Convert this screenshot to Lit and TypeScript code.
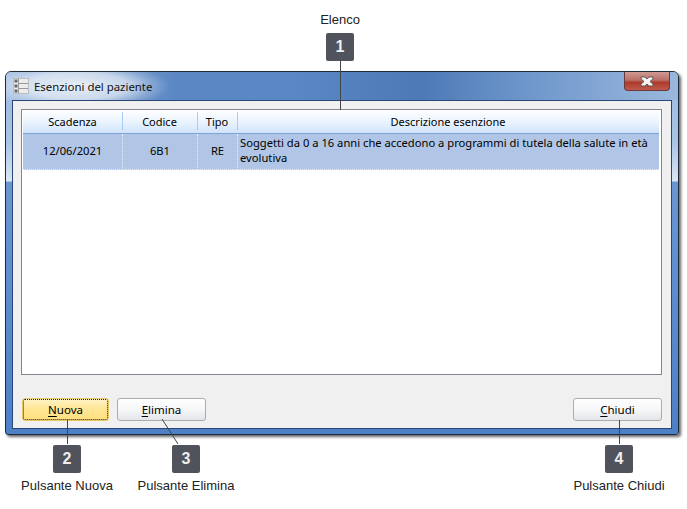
import { LitElement, html, css } from "lit";
import { customElement } from "lit/decorators.js";

const rows = [
  { scad: "12/06/2021", cod: "6B1", tipo: "RE", desc: "Soggetti da 0 a 16 anni che accedono a programmi di tutela della salute in età evolutiva" },
];

@customElement("app-root")
export class AppRoot extends LitElement {
  static styles = css`
    :host { display: block; position: relative; width: 687px; height: 509px; background: #fff; overflow: hidden; font-family: "Noto Sans", sans-serif; }
    .top { height: 71px; display: flex; flex-direction: column; align-items: center; width: 680px; padding-top: 13px; box-sizing: border-box; }
    .lbl { font: 13px/14px "Liberation Sans", sans-serif; color: #222; white-space: nowrap; }
    .badge { width: 28px; height: 28px; background: #50535b; border-radius: 2px; color: #eee; font: bold 16px/28px "Liberation Sans", sans-serif; text-align: center; }
    .top .badge { margin-top: 6px; }
    .win { margin-left: 5px; width: 674px; height: 364px; box-sizing: border-box; border: 1px solid #1f2a3a; border-radius: 6px 6px 3px 3px; box-shadow: 2px 2px 3px rgba(0,0,0,.6);
      background: linear-gradient(180deg, #9bb9de 0, #a9c4e4 70px, #dbe7f4 109px, #6a96d2 110px, #4e80c6 100%); padding: 0 6px 5px 6px; display: flex; flex-direction: column; position: relative; }
    .tbar { height: 28px; flex: none; display: flex; align-items: center; margin: 0 -6px; padding: 0 6px; gap: 5px; position: relative;
      background: radial-gradient(ellipse 92px 24px at 72px 14px, rgba(255,255,255,.8) 0, rgba(255,255,255,.6) 55%, rgba(255,255,255,.2) 82%, rgba(255,255,255,0) 100%), linear-gradient(90deg, #a6c0e2 0, #5b88c4 25%, #5a88c6 42%, #4d7ab6 62%, #6f97cc 78%, #9ab8dc 100%); border-radius: 5px 5px 0 0; }
    .ticon { margin: 0 0 0 1px; flex: none; }
    .ttext { font-size: 11.4px; color: #111; }
    .close { position: absolute; right: 8px; top: 0; width: 46px; height: 19px; box-sizing: border-box; border: 1px solid #6b3a3a; border-top: none; border-radius: 0 0 4px 4px;
      background: linear-gradient(180deg, #cf9a94 0, #b96f67 45%, #ad3a2c 58%, #bd5a4c 100%); display: flex; align-items: center; justify-content: center; }
    .client { flex: 1; background: #f0f0f0; border: 1px solid #2a4676; padding: 8px 9px 7px 8px; display: flex; flex-direction: column; min-height: 0; }
    .list { height: 266px; flex: none; box-sizing: border-box; border: 1px solid #828790; background: #fff; padding: 1px; }
    .grid { display: grid; grid-template-columns: 99px 75px 40px 1fr; margin-right: 1px; font-size: 11px; color: #000; }
    .h { height: 22px; background: linear-gradient(180deg, #fdfeff 0, #eaf3fe 50%, #cfe3fb 100%); border-bottom: 1px solid #7ea5d8; text-align: center; line-height: 21px; position: relative; }
    .h + .h::before { content: ""; position: absolute; left: 0; top: 1px; bottom: 3px; width: 1px; background: #a9cdf5; }
    .c { height: 35px; background: #b1c6e6; border-bottom: 1px dotted #e8eef7; box-sizing: content-box; text-align: center; line-height: 33px; font-size: 11.2px; }
    .c + .c { border-left: 1px dotted #e8eef7; }
    .c.d { text-align: left; line-height: 15px; padding: 1px 0 0 2px; height: 34px; }
    .foot { margin-top: 23px; display: flex; gap: 8px; padding-left: 1px; }
    .btn { width: 89px; height: 23px; box-sizing: border-box; border: 1px solid #a9acb0; border-radius: 3px; background: linear-gradient(180deg, #fff 0, #f6f7f9 50%, #e3e5e9 100%); font: 11.5px/20px "Noto Sans", sans-serif; color: #000; text-align: center; padding: 0; }
    .btn u { text-underline-offset: 2px; }
    .btn.def { width: 87px; border: 1px solid #e8c860; background: linear-gradient(180deg, #fff3c8 0, #ffe796 45%, #ffdf80 100%); outline: 1px dotted #222; outline-offset: -2px; }
    .btn.end { margin-left: auto; }
    .bottom { position: relative; display: flex; padding: 10px 0 0 17px; }
    .call { width: 100px; display: flex; flex-direction: column; align-items: center; gap: 6px; }
    .call.b { margin-left: 19px; }
    .call.c4 { margin-left: 333px; }
    svg.lines { position: absolute; left: 0; top: 0; width: 687px; height: 509px; pointer-events: none; }
  `;

  render() {
    return html`
      <div class="top"><div class="lbl">Elenco</div><div class="badge">1</div></div>
      <div class="win">
        <div class="tbar">
          <svg class="ticon" width="16" height="16" viewBox="0 0 16 16">
            <rect x=".5" y=".5" width="15" height="15" fill="#ececec" stroke="#bdbdbd"/>
            <path d="M6 5.5h9M6 10.5h9M5.5 .5v15" stroke="#999" fill="none"/>
            <path d="M1.5 1.5h3v3h-3zM1.5 6.5h3v3h-3zM1.5 11.5h3v3h-3z" fill="#666"/>
          </svg>
          <span class="ttext">Esenzioni del paziente</span>
          <div class="close">
            <svg width="14" height="11" viewBox="0 0 14 11">
              <path d="M1 1H5L7 3L9 1H13V3L10 5.5L13 8V10H9L7 8L5 10H1V8L4 5.5L1 3Z" fill="#f4f4f4" stroke="#6a5555" stroke-width="1" stroke-linejoin="round"/>
            </svg>
          </div>
        </div>
        <div class="client">
          <div class="list">
            <div class="grid">
              <div class="h">Scadenza</div><div class="h">Codice</div><div class="h">Tipo</div><div class="h">Descrizione esenzione</div>
              ${rows.map((r) => html`
                <div class="c">${r.scad}</div><div class="c">${r.cod}</div><div class="c">${r.tipo}</div><div class="c d">${r.desc}</div>`)}
            </div>
          </div>
          <div class="foot">
            <button class="btn def"><u>N</u>uova</button>
            <button class="btn"><u>E</u>limina</button>
            <button class="btn end"><u>C</u>hiudi</button>
          </div>
        </div>
      </div>
      <div class="bottom">
        <div class="call"><div class="badge">2</div><div class="lbl">Pulsante Nuova</div></div>
        <div class="call b"><div class="badge">3</div><div class="lbl">Pulsante Elimina</div></div>
        <div class="call c4"><div class="badge">4</div><div class="lbl">Pulsante Chiudi</div></div>
      </div>
      <svg class="lines" viewBox="0 0 687 509">
        <path d="M340.5 61V110M67.5 420V444M162 419L178 444M619.5 420V444" stroke="#44464c" fill="none"/>
      </svg>
    `;
  }
}
